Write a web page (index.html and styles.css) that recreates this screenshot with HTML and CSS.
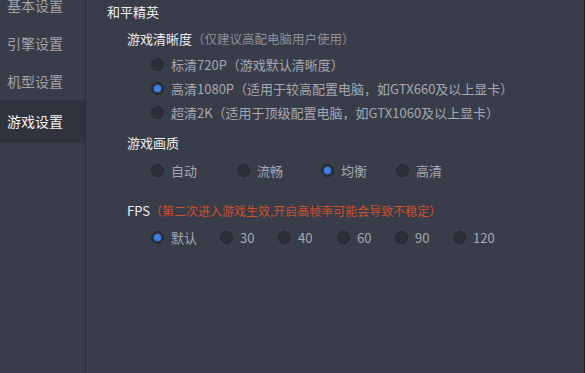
FILE: index.html
```html
<!DOCTYPE html>
<html lang="zh-CN">
<head>
    <meta charset="UTF-8">
    <title>游戏设置</title>
    <link rel="stylesheet" href="styles.css">
</head>
<body>
    <div class="app">
        <div class="sidebar">
            <div class="nav-item first">基本设置</div>
            <div class="nav-item">引擎设置</div>
            <div class="nav-item">机型设置</div>
            <div class="nav-item active">游戏设置</div>
        </div>
        <div class="main">
            <div class="game-title">和平精英</div>

            <div class="group-label label-res">游戏清晰度<span class="hint">（仅建议高配电脑用户使用）</span></div>
            <div class="radio-list">
                <div class="radio"><span class="dot"></span>标清720P（游戏默认清晰度）</div>
                <div class="radio checked"><span class="dot"></span>高清1080P（适用于较高配置电脑，如GTX660及以上显卡）</div>
                <div class="radio"><span class="dot"></span>超清2K（适用于顶级配置电脑，如GTX1060及以上显卡）</div>
            </div>

            <div class="group-label label-quality">游戏画质</div>
            <div class="radio-row quality">
                <div class="radio"><span class="dot"></span>自动</div>
                <div class="radio"><span class="dot"></span>流畅</div>
                <div class="radio checked"><span class="dot"></span>均衡</div>
                <div class="radio"><span class="dot"></span>高清</div>
            </div>

            <div class="group-label label-fps">FPS<span class="warn">（第二次进入游戏生效,开启高帧率可能会导致不稳定）</span></div>
            <div class="radio-row fps">
                <div class="radio checked"><span class="dot"></span>默认</div>
                <div class="radio"><span class="dot"></span>30</div>
                <div class="radio"><span class="dot"></span>40</div>
                <div class="radio"><span class="dot"></span>60</div>
                <div class="radio"><span class="dot"></span>90</div>
                <div class="radio"><span class="dot"></span>120</div>
            </div>
        </div>
    </div>
</body>
</html>
```

FILE: styles.css
```css
html, body {
    margin: 0;
    padding: 0;
    background-color: #393c49;
}
body {
    font-family: "Noto Sans CJK SC", "Noto Sans", sans-serif;
    color: #a7a9b1;
    overflow: hidden;
}
.app {
    display: flex;
    width: 584px;
    height: 373px;
    border-right: 1px solid #1e1f25;
    background-color: #393c49;
}
.sidebar {
    width: 85px;
    flex-shrink: 0;
    border-right: 1px solid #2b2d36;
    overflow: hidden;
}
.nav-item {
    height: 38px;
    line-height: 38px;
    padding-left: 7px;
    font-size: 14px;
    color: #a2a4ac;
}
.nav-item.first {
    margin-top: -14px;
}
.nav-item.active {
    height: 43px;
    line-height: 43px;
    background-color: #30323d;
    color: #f2f2f4;
}
.main {
    flex: 1;
    padding-left: 21px;
}
.game-title {
    margin-top: 2px;
    height: 20px;
    line-height: 20px;
    font-size: 13px;
    color: #f0f0f2;
}
.group-label {
    height: 20px;
    line-height: 20px;
    padding-left: 20px;
    font-size: 13px;
    color: #eeeef0;
}
.label-res {
    margin-top: 7px;
}
.label-quality {
    margin-top: 9px;
}
.label-fps {
    margin-top: 19px;
}
.hint {
    font-size: 12.5px;
    color: #8e9099;
}
.warn {
    font-size: 12px;
    color: #d0502c;
}
.radio-list {
    margin-top: 3px;
    padding-left: 44px;
}
.radio {
    display: flex;
    align-items: center;
    height: 24px;
    font-size: 13px;
    color: #a7a9b1;
    white-space: nowrap;
}
.dot {
    width: 11px;
    height: 11px;
    border-radius: 50%;
    border: 1px solid #25262e;
    background-color: #2c2e38;
    margin-right: 7px;
    position: relative;
    flex-shrink: 0;
}
.radio.checked .dot::after {
    content: "";
    position: absolute;
    left: 2px;
    top: 2px;
    width: 7px;
    height: 7px;
    border-radius: 50%;
    background-color: #3f7fe4;
    box-shadow: 0 0 2px rgba(70, 130, 240, 0.7);
}
.radio-row {
    display: grid;
    padding-left: 44px;
}
.quality {
    margin-top: 5px;
    grid-template-columns: 86px 84px 75px auto;
}
.fps {
    margin-top: 4px;
    grid-template-columns: 69px 58px 59px 58px 58px auto;
}
```
